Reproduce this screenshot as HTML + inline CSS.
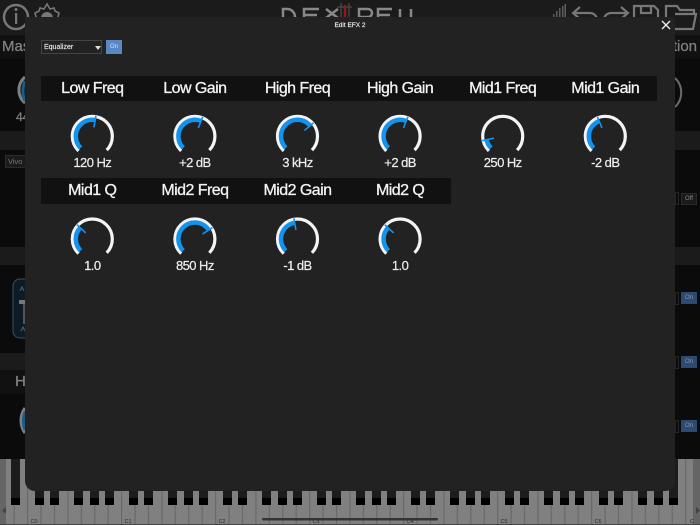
<!DOCTYPE html>
<html><head><meta charset="utf-8"><style>
html,body{margin:0;padding:0;background:#1b1b1b}
#p{position:relative;width:700px;height:525px;overflow:hidden;background:#1b1b1b;font-family:"Liberation Sans",sans-serif}
.a{position:absolute}
.hd{position:absolute;top:0;height:100%;width:102.6px;text-align:center;color:#f4f4f4;font-size:16px;letter-spacing:-.55px;line-height:26.500px;-webkit-text-stroke:.3px #f4f4f4}
.v{position:absolute;width:102.6px;text-align:center;color:#eee;font-size:13px;letter-spacing:-.55px;line-height:14px;-webkit-text-stroke:.2px #eee}
.b{position:absolute;left:681px;width:16px;height:12px;font-size:6px;line-height:12px;text-align:center;box-sizing:border-box}
.on{background:#2d4a72;color:#8a97a8}
.g{position:absolute;color:#808080;font-size:15px;line-height:18px;-webkit-text-stroke:.3px #808080}
</style></head><body><div id="p">
<div class="a" style="left:0;top:35px;width:700px;height:24px;background:#111"></div>
<div class="a" style="left:0;top:59px;width:700px;height:72px;background:#0b0b0b"></div>
<div class="a" style="left:0;top:150px;width:700px;height:97px;background:#0b0b0b"></div>
<div class="a" style="left:0;top:265px;width:700px;height:88px;background:#0b0b0b"></div>
<div class="a" style="left:0;top:370px;width:700px;height:24px;background:#111"></div>
<div class="a" style="left:0;top:394px;width:700px;height:65px;background:#0b0b0b"></div>
<div class="a" style="left:675px;top:353px;width:25px;height:106px;background:#0b0b0b"></div>
<div class="g" style="left:2px;top:38px">Mas</div>
<div class="g" style="left:15px;top:373px">Ha</div>
<div class="g" style="left:16px;top:110px;font-size:12px;line-height:14px">44</div>
<div class="g" style="left:665px;top:38px;width:32px;text-align:right">tion</div>
<div class="a" style="left:5px;top:155px;width:30px;height:13px;background:#1b1b1b;border:1px solid #2c2c2c;box-sizing:border-box;color:#777;font-size:7.5px;line-height:11px;padding-left:2px;white-space:nowrap;overflow:hidden">Vivo S</div>

<svg class="a" style="left:0;top:0" width="700" height="459" viewBox="0 0 700 459" fill="none">
<circle cx="16" cy="17" r="12" stroke="#777" stroke-width="2.500"/>
<rect x="15" y="13" width="2.200" height="11" fill="#777"/><circle cx="16" cy="9.500" r="1.500" fill="#777"/>
<path d="M36 17l-1-4 4-2 1-3 4 1 3-5 3 5 4-1 1 3 4 2-1 4 1 5H35z" stroke="#777" stroke-width="1.600"/>
<circle cx="47" cy="18" r="6" fill="#777"/>
<g stroke="#888" stroke-width="2.500">
<path d="M283 18V9h5a8 8 0 0 1 7 8v1M304 18V9h15M304 15h13M326 9l12 9M338 9l-12 9M359 18V9h9a4 4 0 0 1 0 8h-9M378 18V9h14M378 15h12M400 9v9M411 9v9"/></g>
<path d="M337 7h15M341 3v15M349 3v15" stroke="#555" stroke-width="1"/>
<path d="M345 5v13" stroke="#8a1c1c" stroke-width="2.500"/>
<g fill="#5c5c5c"><rect x="553" y="14" width="1.500" height="3"/><rect x="556" y="11" width="1.500" height="6"/><rect x="559" y="8" width="1.500" height="9"/><rect x="562" y="6" width="1.500" height="11"/><rect x="564.500" y="4" width="1.500" height="13"/></g>
<g stroke="#777" stroke-width="2.200">
<path d="M580 7l-7 6 7 6M573 13h17a7 7 0 0 1 7 6M621 7l7 6-7 6M628 13h-17a7 7 0 0 0-7 6"/>
<path d="M634 17V6h20l4 4v7M641 6v7h10V6"/>
<path d="M666 24V6h11l3 4h14v4M671 29h22l3-15H675"/></g>
<path d="M25 77a17 17 0 0 0 0 26" stroke="#808080" stroke-width="3"/>
<path d="M25 81a26 26 0 0 0 0 20" stroke="#1c5c88" stroke-width="3"/>
<path d="M25 408a21.500 21.500 0 0 0 0 25" stroke="#808080" stroke-width="3"/>
<path d="M25 412a26 26 0 0 0 0 18" stroke="#1c5c88" stroke-width="3"/>
<path d="M675 78a20 20 0 0 1 0 29" stroke="#6a6a6a" stroke-width="2"/>
<rect x="13" y="279" width="20" height="59" rx="7" fill="#0e1a24" stroke="#35526a" stroke-width="1"/>
<rect x="19" y="300" width="8" height="4" fill="#777"/><rect x="23" y="304" width="3" height="20" fill="#555"/>
<path d="M20 291l2-4 2 4M21 331l2-4 2 4" stroke="#4c6577"/>
<g stroke="#262626"><rect x="675.500" y="192.500" width="3" height="12"/><rect x="675.500" y="292.500" width="3" height="12"/><rect x="675.500" y="356.500" width="3" height="12"/><rect x="675.500" y="420.500" width="3" height="12"/></g>
</svg>
<div class="b" style="top:193px;background:#1a1a1a;border:1px solid #2a2a2a;color:#8a8a8a;line-height:10px">Off</div>
<div class="b on" style="top:292px">On</div>
<div class="b on" style="top:356px">On</div>
<div class="b on" style="top:420px">On</div>

<svg class="a" style="left:0;top:459px" width="700" height="66" viewBox="0 0 700 66">
<defs>
<pattern id="w" patternUnits="userSpaceOnUse" x="27" y="0" width="13.430" height="66"><rect width="13.430" height="66" fill="#808080"/><rect width="1.200" height="66" fill="#696969"/></pattern>
<pattern id="k" patternUnits="userSpaceOnUse" x="35" y="0" width="94" height="66">
<rect x="0" width="9" height="46" fill="#1c1c1c"/><rect x="0" y="39" width="9" height="7" fill="#000"/>
<rect x="15" width="9" height="46" fill="#1c1c1c"/><rect x="15" y="39" width="9" height="7" fill="#000"/>
<rect x="39" width="9" height="46" fill="#1c1c1c"/><rect x="39" y="39" width="9" height="7" fill="#000"/>
<rect x="55" width="9" height="46" fill="#1c1c1c"/><rect x="55" y="39" width="9" height="7" fill="#000"/>
<rect x="70" width="9" height="46" fill="#1c1c1c"/><rect x="70" y="39" width="9" height="7" fill="#000"/>
</pattern></defs>
<rect width="700" height="66" fill="url(#w)"/>
<rect x="0" width="693" height="66" fill="url(#k)"/>
<rect x="0" width="6" height="66" fill="#656565"/>
<rect x="693" width="7" height="66" fill="#656565"/>
<path d="M6 48l-4 3.500 4 3.500z" fill="#444"/>
<path d="M696 48l4 3.500-4 3.500z" fill="#444"/>
<rect y="65" width="700" height="1" fill="#444"/>
<g font-size="5.500" fill="#2c2c2c" font-family="Liberation Sans" text-anchor="middle">
<text x="34" y="64">C0</text><text x="128" y="64">C1</text><text x="222" y="64">C2</text><text x="316" y="64">C3</text><text x="410" y="64">C4</text><text x="504" y="64">C5</text><text x="598" y="64">C6</text><text x="692" y="64">C</text></g>
<rect x="262" y="59" width="176" height="2.500" rx="1.200" fill="#333"/>
</svg>

<!-- modal -->
<div class="a" style="left:25px;top:17px;width:650px;height:474px;background:#222;border-radius:2px 2px 10px 10px"></div>
<div class="a" style="left:25px;top:19.500px;width:650px;text-align:center;color:#eee;font-size:6.500px;line-height:12px;-webkit-text-stroke:.15px #eee">Edit EFX 2</div>
<svg class="a" style="left:661px;top:20px" width="10" height="10"><path d="M1 1l8 8M9 1l-8 8" stroke="#f2f2f2" stroke-width="1.300"/></svg>
<div class="a" style="left:41px;top:40px;width:61px;height:14px;background:#222;border:1px solid #444;box-sizing:border-box;color:#e4e4e4;font-size:7px;line-height:13px;padding-left:2px;-webkit-text-stroke:.15px #e4e4e4">Equalizer</div>
<div class="a" style="left:94.500px;top:45.500px;width:0;height:0;border-left:3px solid transparent;border-right:3px solid transparent;border-top:4px solid #ddd"></div>
<div class="a" style="left:106px;top:40px;width:16px;height:14px;background:#5a87c6;color:#d5e0ee;font-size:6px;line-height:14px;text-align:center">On</div>

<div class="a" style="left:41px;top:75.500px;width:616px;height:25px;background:#111">
<div class="hd" style="left:0">Low Freq</div><div class="hd" style="left:102.600px">Low Gain</div><div class="hd" style="left:205.200px">High Freq</div><div class="hd" style="left:307.800px">High Gain</div><div class="hd" style="left:410.400px">Mid1 Freq</div><div class="hd" style="left:513px">Mid1 Gain</div>
</div>
<div class="a" style="left:41px;top:178px;width:410px;height:25.500px;background:#111">
<div class="hd" style="left:0">Mid1 Q</div><div class="hd" style="left:102.600px">Mid2 Freq</div><div class="hd" style="left:205.200px">Mid2 Gain</div><div class="hd" style="left:307.800px">Mid2 Q</div>
</div>

<svg class="a" style="left:0;top:0" width="700" height="300" viewBox="0 0 700 300" fill="none">
<g transform="translate(92.300 136.300)"><circle r="20" stroke="#f4f4f4" stroke-width="3.200" pathLength="360" stroke-dasharray="270 90" transform="rotate(135)"/><circle r="16.500" stroke="#1193ee" stroke-width="4.500" pathLength="360" stroke-dasharray="145 360" transform="rotate(135)"/><path d="M0-21V-9" stroke="#1193ee" stroke-width="1.600" transform="rotate(10)"/></g>
<g transform="translate(194.900 136.300)"><circle r="20" stroke="#f4f4f4" stroke-width="3.200" pathLength="360" stroke-dasharray="270 90" transform="rotate(135)"/><circle r="16.500" stroke="#1193ee" stroke-width="4.500" pathLength="360" stroke-dasharray="157 360" transform="rotate(135)"/><path d="M0-21V-9" stroke="#1193ee" stroke-width="1.600" transform="rotate(22)"/></g>
<g transform="translate(297.500 136.300)"><circle r="20" stroke="#f4f4f4" stroke-width="3.200" pathLength="360" stroke-dasharray="270 90" transform="rotate(135)"/><circle r="16.500" stroke="#1193ee" stroke-width="4.500" pathLength="360" stroke-dasharray="185 360" transform="rotate(135)"/><path d="M0-21V-9" stroke="#1193ee" stroke-width="1.600" transform="rotate(50)"/></g>
<g transform="translate(400.100 136.300)"><circle r="20" stroke="#f4f4f4" stroke-width="3.200" pathLength="360" stroke-dasharray="270 90" transform="rotate(135)"/><circle r="16.500" stroke="#1193ee" stroke-width="4.500" pathLength="360" stroke-dasharray="157 360" transform="rotate(135)"/><path d="M0-21V-9" stroke="#1193ee" stroke-width="1.600" transform="rotate(22)"/></g>
<g transform="translate(502.700 136.300)"><circle r="20" stroke="#f4f4f4" stroke-width="3.200" pathLength="360" stroke-dasharray="270 90" transform="rotate(135)"/><circle r="16.500" stroke="#1193ee" stroke-width="4.500" pathLength="360" stroke-dasharray="33 360" transform="rotate(135)"/><path d="M0-21V-9" stroke="#1193ee" stroke-width="1.600" transform="rotate(-102)"/></g>
<g transform="translate(605.300 136.300)"><circle r="20" stroke="#f4f4f4" stroke-width="3.200" pathLength="360" stroke-dasharray="270 90" transform="rotate(135)"/><circle r="16.500" stroke="#1193ee" stroke-width="4.500" pathLength="360" stroke-dasharray="113 360" transform="rotate(135)"/><path d="M0-21V-9" stroke="#1193ee" stroke-width="1.600" transform="rotate(-22)"/></g>
<g transform="translate(92.300 239)"><circle r="20" stroke="#f4f4f4" stroke-width="3.200" pathLength="360" stroke-dasharray="270 90" transform="rotate(135)"/><circle r="16.500" stroke="#1193ee" stroke-width="4.500" pathLength="360" stroke-dasharray="88 360" transform="rotate(135)"/><path d="M0-21V-9" stroke="#1193ee" stroke-width="1.600" transform="rotate(-47)"/></g>
<g transform="translate(194.900 239)"><circle r="20" stroke="#f4f4f4" stroke-width="3.200" pathLength="360" stroke-dasharray="270 90" transform="rotate(135)"/><circle r="16.500" stroke="#1193ee" stroke-width="4.500" pathLength="360" stroke-dasharray="192 360" transform="rotate(135)"/><path d="M0-21V-9" stroke="#1193ee" stroke-width="1.600" transform="rotate(57)"/></g>
<g transform="translate(297.500 239)"><circle r="20" stroke="#f4f4f4" stroke-width="3.200" pathLength="360" stroke-dasharray="270 90" transform="rotate(135)"/><circle r="16.500" stroke="#1193ee" stroke-width="4.500" pathLength="360" stroke-dasharray="125 360" transform="rotate(135)"/><path d="M0-21V-9" stroke="#1193ee" stroke-width="1.600" transform="rotate(-10)"/></g>
<g transform="translate(400.100 239)"><circle r="20" stroke="#f4f4f4" stroke-width="3.200" pathLength="360" stroke-dasharray="270 90" transform="rotate(135)"/><circle r="16.500" stroke="#1193ee" stroke-width="4.500" pathLength="360" stroke-dasharray="88 360" transform="rotate(135)"/><path d="M0-21V-9" stroke="#1193ee" stroke-width="1.600" transform="rotate(-47)"/></g>
</svg>

<div class="v" style="left:41px;top:156px">120 Hz</div><div class="v" style="left:143.600px;top:156px">+2 dB</div><div class="v" style="left:246.200px;top:156px">3 kHz</div><div class="v" style="left:348.800px;top:156px">+2 dB</div><div class="v" style="left:451.400px;top:156px">250 Hz</div><div class="v" style="left:554px;top:156px">-2 dB</div>
<div class="v" style="left:41px;top:259px">1.0</div><div class="v" style="left:143.600px;top:259px">850 Hz</div><div class="v" style="left:246.200px;top:259px">-1 dB</div><div class="v" style="left:348.800px;top:259px">1.0</div>
</div></body></html>
